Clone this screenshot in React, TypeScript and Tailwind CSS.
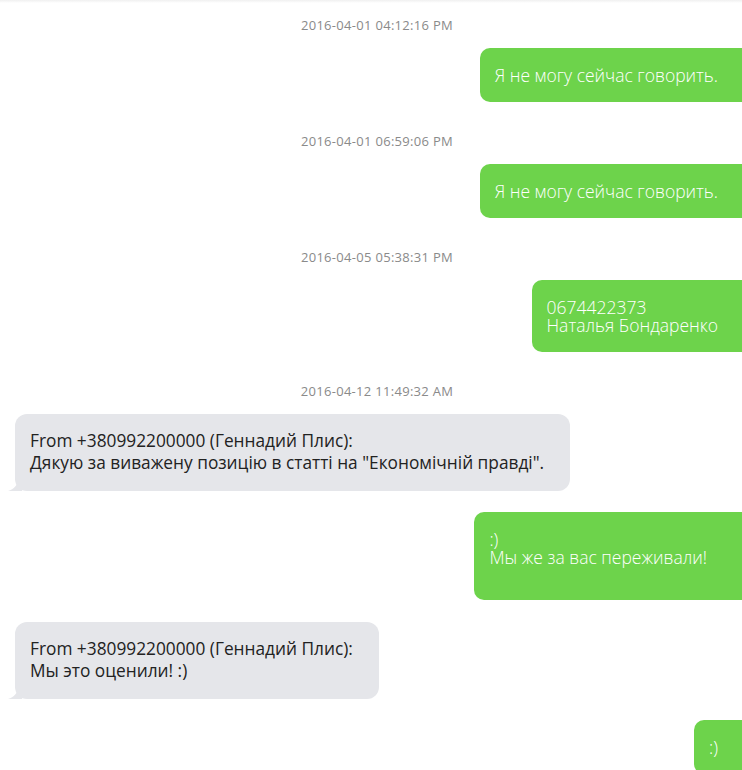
type Msg =
  | { kind: 'time'; text: string }
  | { kind: 'out'; lines: string[]; extra?: boolean }
  | { kind: 'in'; lines: string[] };

const messages: Msg[] = [
  { kind: 'time', text: '2016-04-01 04:12:16 PM' },
  { kind: 'out', lines: ['Я не могу сейчас говорить.'] },
  { kind: 'time', text: '2016-04-01 06:59:06 PM' },
  { kind: 'out', lines: ['Я не могу сейчас говорить.'] },
  { kind: 'time', text: '2016-04-05 05:38:31 PM' },
  { kind: 'out', lines: ['0674422373', 'Наталья Бондаренко'] },
  { kind: 'time', text: '2016-04-12 11:49:32 AM' },
  {
    kind: 'in',
    lines: [
      'From +380992200000 (Геннадий Плис):',
      'Дякую за виважену позицію в статті на "Економічній правді".',
    ],
  },
  { kind: 'out', lines: [':)', 'Мы же за вас переживали!'], extra: true },
  { kind: 'in', lines: ['From +380992200000 (Геннадий Плис):', 'Мы это оценили! :)'] },
  { kind: 'out', lines: [':)'] },
];

function Tail() {
  return (
    <svg
      className="absolute bottom-0 left-[-7px]"
      width="14"
      height="12"
      viewBox="0 0 14 12"
    >
      <path d="M10 0 C10 6 6 10 0 12 L14 12 L14 0 Z" fill="#e5e6ea" />
    </svg>
  );
}

export default function App() {
  return (
    <div className="h-[770px] w-full overflow-hidden bg-white font-['Open_Sans','Noto_Sans',sans-serif]">
      <div className="h-[3px] bg-gradient-to-b from-[#f0f0f0] to-white" />
      <div className="flex flex-col pt-[14px]">
        {messages.map((m, i) => {
          if (m.kind === 'time') {
            return (
              <div
                key={i}
                className="mb-[15px] mt-[9px] pl-[12px] text-center text-[13px] leading-[16px] tracking-[0.3px] text-[#8a8a8a] first:mt-0"
              >
                {m.text}
              </div>
            );
          }
          if (m.kind === 'out') {
            return (
              <div key={i} className="mb-[22px] flex justify-end">
                <div
                  className={
                    'rounded-l-[10px] bg-[#6dd34b] pl-[15px] pt-[18px] text-[17.5px] leading-[18px] font-light text-white ' +
                    (m.extra ? 'pb-[34px] pr-[35px]' : 'pb-[18px] pr-[24px]')
                  }
                >
                  {m.lines.map((l, j) => (
                    <div key={j}>{l}</div>
                  ))}
                </div>
              </div>
            );
          }
          return (
            <div key={i} className="mb-[21px] flex justify-start pl-[15px]">
              <div className="relative rounded-[12px] bg-[#e5e6ea] pl-[15px] pr-[26px] pb-[17px] pt-[16px] text-[17.3px] leading-[22px] text-[#222]">
                <Tail />
                <div className="relative">
                  {m.lines.map((l, j) => (
                    <div key={j}>{l}</div>
                  ))}
                </div>
              </div>
            </div>
          );
        })}
      </div>
    </div>
  );
}
